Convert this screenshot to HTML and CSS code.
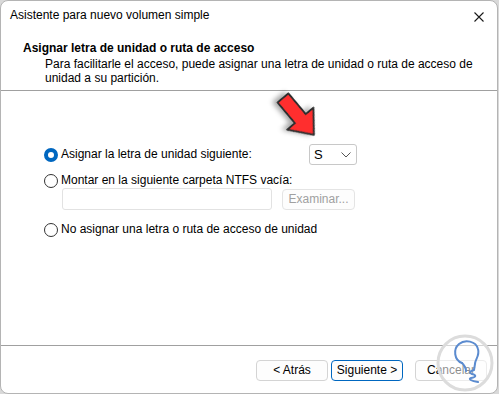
FILE: index.html
```html
<!DOCTYPE html>
<html lang="es">
<head>
    <meta charset="UTF-8">
    <title>Asistente para nuevo volumen simple</title>
    <link rel="stylesheet" href="styles.css">
</head>
<body>

    <div class="window">
        <!-- Title bar -->
        <div class="titlebar">
            <span class="title">Asistente para nuevo volumen simple</span>
            <svg class="close" width="10" height="10" viewBox="0 0 10 10">
                <path d="M0.5 0.5 L9.5 9.5 M9.5 0.5 L0.5 9.5" stroke="#1a1a1a" stroke-width="1.1" fill="none"/>
            </svg>
        </div>

        <!-- Wizard header -->
        <div class="wizard-header">
            <h1>Asignar letra de unidad o ruta de acceso</h1>
            <p>Para facilitarle el acceso, puede asignar una letra de unidad o ruta de acceso de<br>unidad a su partición.</p>
        </div>

        <!-- Options -->
        <div class="wizard-body">
            <div class="option-row first">
                <span class="radio checked"></span>
                <span class="option-label">Asignar la letra de unidad siguiente:</span>
                <div class="dropdown">
                    <span>S</span>
                    <svg width="10" height="6" viewBox="0 0 10 6">
                        <path d="M0.5 0.5 L5 5 L9.5 0.5" stroke="#555" stroke-width="1" fill="none"/>
                    </svg>
                </div>
            </div>
            <div class="option-row">
                <span class="radio"></span>
                <span class="option-label">Montar en la siguiente carpeta NTFS vacía:</span>
            </div>
            <div class="folder-row">
                <div class="folder-input"></div>
                <div class="btn disabled">Examinar...</div>
            </div>
            <div class="option-row last">
                <span class="radio"></span>
                <span class="option-label">No asignar una letra o ruta de acceso de unidad</span>
            </div>
        </div>

        <!-- Footer buttons -->
        <div class="wizard-footer">
            <div class="btn">&lt; Atrás</div>
            <div class="btn primary">Siguiente &gt;</div>
            <div class="btn cancel">Cancelar</div>
        </div>

        <!-- Red arrow annotation -->
        <svg class="arrow" width="70" height="70" viewBox="0 0 70 70">
            <defs>
                <filter id="shadow" x="-50%" y="-50%" width="200%" height="200%">
                    <feDropShadow dx="-3" dy="3" stdDeviation="2.5" flood-color="#000" flood-opacity="0.35"/>
                </filter>
            </defs>
            <g transform="translate(23 18) rotate(50)" filter="url(#shadow)">
                <polygon points="0,-7 27,-7 27,-17 48,0 27,17 27,7 0,7" fill="#ff2f2f" stroke="#2e2e2e" stroke-width="2" stroke-linejoin="round"/>
            </g>
        </svg>

        <!-- Watermark logo -->
        <svg class="watermark" width="62" height="62" viewBox="0 0 62 62">
            <circle cx="31" cy="31" r="27" fill="rgba(255,255,255,0.55)" stroke="#dcdcdc" stroke-width="3"/>
            <path d="M28 31 C20 28 19 17 25 12 C31 7 42 9 44 17 C46 24 41 27 41 32 L40 38 C37 39 34 40 38 42 C42 43 43 45 37 46 C34 47 37 49 44 50"
                  fill="none" stroke="#5b8bcf" stroke-width="2" stroke-linecap="round" stroke-linejoin="round"/>
            <path d="M28 31 C30 33 32 35 32 39" fill="none" stroke="#5b8bcf" stroke-width="2" stroke-linecap="round"/>
        </svg>
    </div>

</body>
</html>
```

FILE: styles.css
```css
* {
    box-sizing: border-box;
    margin: 0;
    padding: 0;
}

body {
    background-color: #d9d9d9;
    font-family: "Liberation Sans", Arial, sans-serif;
    font-size: 12px;
    color: #000;
}

/* Window frame */
.window {
    position: relative;
    width: 498px;
    height: 394px;
    background-color: #fff;
    border: 1px solid #b4b4b4;
    border-radius: 8px;
    display: flex;
    flex-direction: column;
    overflow: hidden;
}

.titlebar {
    height: 29px;
    display: flex;
    align-items: flex-start;
    justify-content: space-between;
    padding: 7px 13px 0 9px;
    line-height: 15px;
}

.titlebar .close {
    margin-top: 4px;
}

/* Header */
.wizard-header {
    height: 61px;
    padding: 11px 0 0 22px;
    border-bottom: 1px solid #a0a0a0;
    line-height: 14px;
}

.wizard-header h1 {
    font-size: 12px;
    font-weight: bold;
    line-height: 15px;
}

.wizard-header p {
    white-space: nowrap;
    padding-left: 22px;
    margin-top: 1px;
}

/* Options */
.wizard-body {
    flex: 1;
    padding: 53px 0 0 43px;
}

.option-row {
    display: flex;
    align-items: center;
    height: 15px;
    margin-top: 8px;
}

.option-row.first {
    height: 21px;
    margin-top: 0;
}

.option-row.first .option-label {
    width: 248px;
}

.option-row.last {
    margin-top: 12px;
}

.radio {
    width: 14px;
    height: 14px;
    border: 1px solid #333;
    border-radius: 50%;
    margin-right: 3px;
    flex-shrink: 0;
}

.radio.checked {
    border: 4px solid #0067c0;
    background-color: #fff;
}

.option-label {
    line-height: 15px;
}

.dropdown {
    width: 48px;
    height: 21px;
    border: 1px solid #c8c8c8;
    border-radius: 3px;
    display: flex;
    align-items: center;
    justify-content: space-between;
    padding: 0 5px 0 4px;
    font-size: 13px;
}

.dropdown svg {
    margin-top: 1px;
}

.folder-row {
    display: flex;
    align-items: center;
    height: 22px;
    padding-left: 18px;
}

.folder-input {
    width: 210px;
    height: 22px;
    border: 1px solid #e2e2e2;
    border-radius: 3px;
}

/* Buttons */
.btn {
    width: 72px;
    height: 21px;
    border: 1px solid #d4d4d4;
    border-radius: 4px;
    background-color: #fdfdfd;
    display: flex;
    align-items: center;
    justify-content: center;
    line-height: 15px;
}

.btn.disabled {
    margin-left: 10px;
    width: 73px;
    height: 21px;
    color: #a0a0a0;
    border-color: #e4e4e4;
}

.btn.primary {
    border-color: #0067c0;
    margin-left: 3px;
}

.btn.cancel {
    margin-left: 12px;
}

.wizard-footer {
    height: 48px;
    border-top: 1px solid #a0a0a0;
    display: flex;
    justify-content: flex-end;
    padding: 14px 10px 0 0;
}

/* Overlays */
.arrow {
    position: absolute;
    left: 259px;
    top: 79px;
}

.watermark {
    position: absolute;
    left: 433px;
    top: 331px;
}
```
